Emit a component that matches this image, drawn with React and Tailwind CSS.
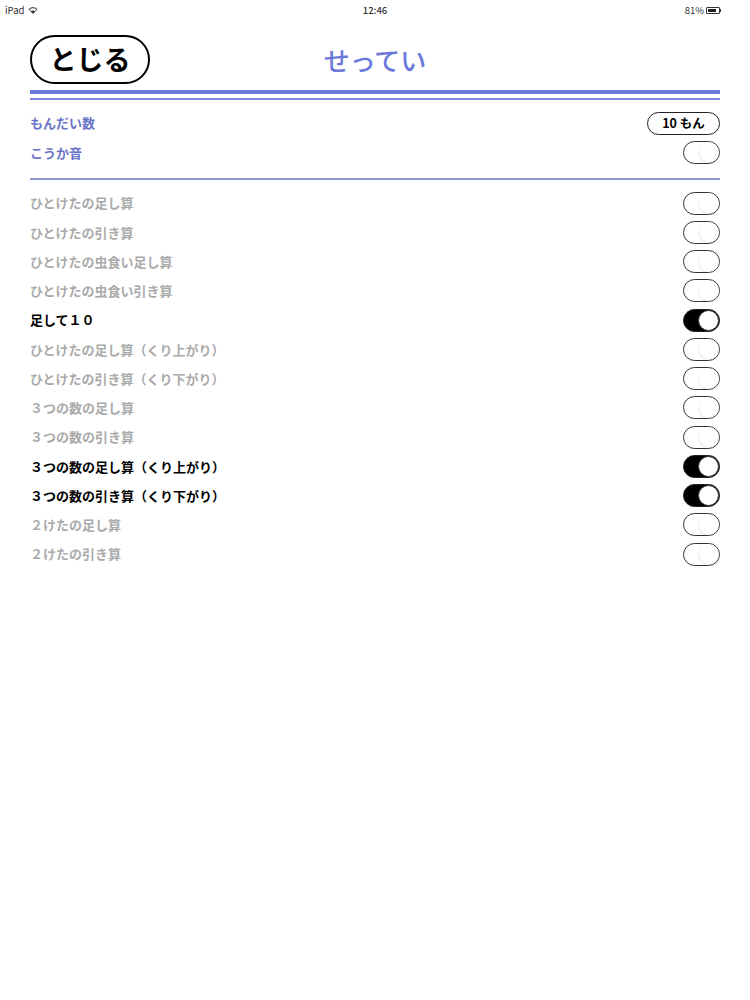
import React from "react";

const items = [
  ["ひとけたの足し算", false],
  ["ひとけたの引き算", false],
  ["ひとけたの虫食い足し算", false],
  ["ひとけたの虫食い引き算", false],
  ["足して１０", true],
  ["ひとけたの足し算（くり上がり）", false],
  ["ひとけたの引き算（くり下がり）", false],
  ["３つの数の足し算", false],
  ["３つの数の引き算", false],
  ["３つの数の足し算（くり上がり）", true],
  ["３つの数の引き算（くり下がり）", true],
  ["２けたの足し算", false],
  ["２けたの引き算", false],
];

function Toggle({ on }) {
  if (on) {
    return (
      <div className="w-[37px] h-[23px] rounded-full bg-black border-[1.5px] border-[#222] flex items-center justify-end">
        <div className="w-[21px] h-[21px] rounded-full bg-white border-[1.5px] border-[#333]" />
      </div>
    );
  }
  return (
    <div className="w-[37px] h-[23px] rounded-full bg-white border-[1.5px] border-[#333] flex items-center justify-end overflow-hidden">
      <div className="w-[20px] h-[20px] rounded-full bg-white shadow-[-1px_1px_1px_rgba(0,0,0,0.08)]" />
    </div>
  );
}

export default function App() {
  const font = { fontFamily: '"Noto Sans CJK JP", "Noto Sans", sans-serif' };
  return (
    <div className="w-[750px] h-[1000px] bg-white" style={font}>
      <div className="h-[20px] flex items-center justify-between px-[5px] text-[9.5px] text-[#333] relative">
        <div className="flex items-center gap-[4px]">
          <span>iPad</span>
          <svg width="10" height="8" viewBox="0 0 10 8">
            <path d="M5 7.5 L1 3.2 A6 6 0 0 1 9 3.2 Z" fill="none" stroke="#333" strokeWidth="1" />
            <path d="M5 7.5 L3 5.3 A3 3 0 0 1 7 5.3 Z" fill="#333" />
          </svg>
        </div>
        <span className="absolute left-1/2 -translate-x-1/2 font-medium">12:46</span>
        <div className="flex items-center gap-[2px] pr-[24px]">
          <span>81%</span>
          <div className="flex items-center">
            <div className="w-[14px] h-[7px] border border-[#333] rounded-[1px] p-[1px]">
              <div className="w-[80%] h-full bg-[#222]" />
            </div>
            <div className="w-[1px] h-[3px] bg-[#333]" />
          </div>
        </div>
      </div>

      <div className="px-[30px]">
        <div className="relative flex items-center mt-[15px] h-[49px]">
          <div className="w-[120px] h-[49px] rounded-full border-2 border-black flex items-center justify-center text-[27px] font-bold text-black leading-none pb-[2px]">
            とじる
          </div>
          <div className="absolute left-1/2 -translate-x-1/2 text-[26px] font-medium text-[#6a78da] leading-none">
            せってい
          </div>
        </div>
        <div className="mt-[6px] h-[4px] bg-[#6a78da]" />
        <div className="mt-[4px] h-[1.5px] bg-[#7b87d8]" />

        <div className="mt-[9px]">
          <div className="h-[29.25px] flex items-center justify-between">
            <span className="text-[13px] font-bold text-[#6a75c8]">もんだい数</span>
            <div className="w-[73px] h-[23px] rounded-full border-[1.5px] border-[#222] flex items-center justify-center text-[12.5px] font-bold text-black">
              10 もん
            </div>
          </div>
          <div className="h-[29.25px] flex items-center justify-between">
            <span className="text-[13px] font-bold text-[#6a75c8]">こうか音</span>
            <Toggle on={false} />
          </div>
        </div>

        <div className="mt-[11px] h-[1.5px] bg-[#8a92cc]" />

        <div className="mt-[9px]">
          {items.map(([label, on]) => (
            <div key={label} className="h-[29.25px] flex items-center justify-between">
              <span className={"text-[13px] font-bold " + (on ? "text-black" : "text-[#aaaaaa]")}>
                {label}
              </span>
              <Toggle on={on} />
            </div>
          ))}
        </div>
      </div>
    </div>
  );
}
